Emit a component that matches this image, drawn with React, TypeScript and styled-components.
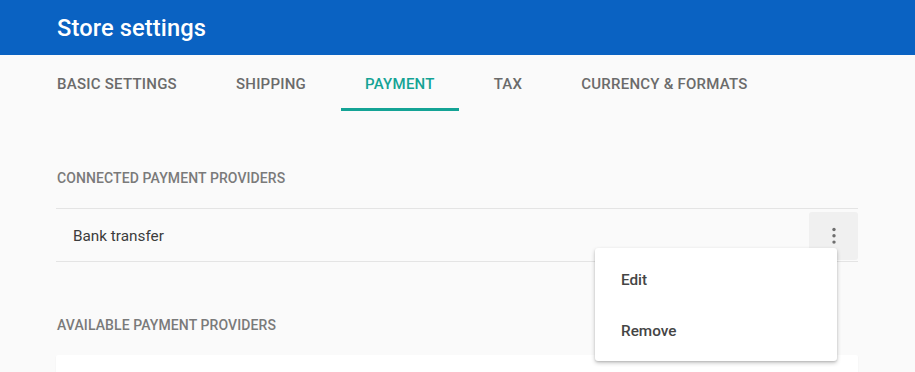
import styled, {createGlobalStyle} from 'styled-components'

const GlobalStyle = createGlobalStyle`
    html, body {
        margin: 0;
        padding: 0;
        background: #fafafa;
        font-family: Roboto, "Noto Sans", sans-serif;
        -webkit-font-smoothing: antialiased;
    }
`

const Page = styled.div`
    height: 372px;
    overflow: hidden;
    background: #fafafa;
`
const Header = styled.header`
    height: 55px;
    background: #0a62c2;
    display: flex;
    align-items: center;
    padding-left: 57px;
`
const Title = styled.h1`
    margin: 0;
    color: #ffffff;
    font-size: 23.7px;
    font-weight: 500;
    letter-spacing: 0.1px;
`
const Tabs = styled.nav`
    display: flex;
    gap: 11px;
    padding-left: 33px;
    height: 56px;
`
const Tab = styled.div<{$active?: boolean}>`
    display: flex;
    align-items: center;
    justify-content: center;
    padding: 4px 24px 0;
    font-size: 15px;
    font-weight: 500;
    letter-spacing: 0.24px;
    text-transform: uppercase;
    color: ${p => p.$active ? '#14a395' : '#6b6b6b'};
    border-bottom: 3px solid ${p => p.$active ? '#14a395' : 'transparent'};
    box-sizing: border-box;
`
const Content = styled.main`
    padding: 59px 57px 0 56px;
`
const SectionTitle = styled.h2`
    margin: 0 0 22px 1px;
    font-size: 14px;
    line-height: 16px;
    font-weight: 500;
    text-transform: uppercase;
    color: #7a7a7a;
    letter-spacing: 0.1px;
`
const ProviderRow = styled.div`
    position: relative;
    height: 54px;
    box-sizing: border-box;
    border-top: 1px solid #e4e4e4;
    border-bottom: 1px solid #e4e4e4;
    display: flex;
    align-items: center;
    justify-content: space-between;
    padding-left: 17px;
    margin-bottom: 55px;
`
const ProviderName = styled.span`
    font-size: 15.3px;
    color: #3c3c3c;
    padding-top: 2px;
`
const KebabButton = styled.button`
    width: 49px;
    height: 48px;
    border: none;
    border-radius: 3px;
    background: #f0f0f0;
    display: flex;
    align-items: center;
    justify-content: center;
    padding: 0;
    margin-top: 1px;
    cursor: pointer;
`
const Menu = styled.ul`
    position: absolute;
    top: 39px;
    right: 21px;
    width: 242px;
    margin: 0;
    padding: 6px 0 5px;
    list-style: none;
    background: #ffffff;
    border-radius: 3px;
    box-shadow: 0 2px 4px rgba(0, 0, 0, 0.22), 0 1px 2px rgba(0, 0, 0, 0.12);
    z-index: 2;
`
const MenuItem = styled.li`
    height: 51px;
    display: flex;
    align-items: center;
    padding-left: 26px;
    font-size: 15.3px;
    font-weight: 500;
    color: #454545;
`
const Card = styled.div`
    height: 80px;
    background: #ffffff;
    border-radius: 2px;
    box-shadow: 0 1px 2px rgba(0, 0, 0, 0.06);
`

const tabs = ['Basic settings', 'Shipping', 'Payment', 'Tax', 'Currency & formats']

function MoreIcon() {
    return (
        <svg width="6" height="20" viewBox="0 0 6 20">
            <circle cx="3" cy="3.5" r="1.7" fill="#6e6e6e"/>
            <circle cx="3" cy="9.8" r="1.7" fill="#6e6e6e"/>
            <circle cx="3" cy="16.1" r="1.7" fill="#6e6e6e"/>
        </svg>
    )
}

export default function App() {
    return (
        <Page>
            <GlobalStyle/>
            <Header>
                <Title>Store settings</Title>
            </Header>
            <Tabs>
                {tabs.map(t => (
                    <Tab key={t} $active={t === 'Payment'}>{t}</Tab>
                ))}
            </Tabs>
            <Content>
                <SectionTitle>Connected payment providers</SectionTitle>
                <ProviderRow>
                    <ProviderName>Bank transfer</ProviderName>
                    <KebabButton aria-label="More">
                        <MoreIcon/>
                    </KebabButton>
                    <Menu>
                        <MenuItem>Edit</MenuItem>
                        <MenuItem>Remove</MenuItem>
                    </Menu>
                </ProviderRow>
                <SectionTitle>Available payment providers</SectionTitle>
                <Card/>
            </Content>
        </Page>
    )
}
